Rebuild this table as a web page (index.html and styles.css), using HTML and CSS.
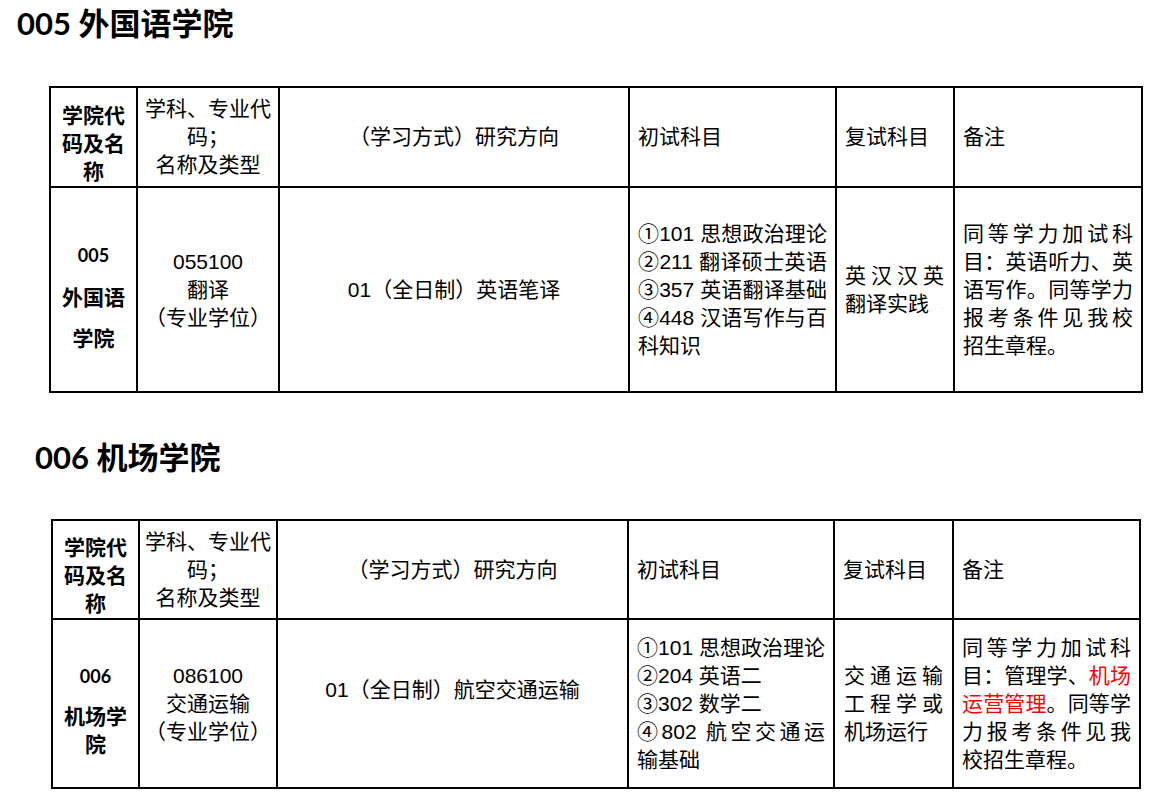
FILE: index.html
```html
<!DOCTYPE html>
<html lang="zh-CN">
<head>
<meta charset="utf-8">
<title>研究生招生专业目录</title>
<link rel="stylesheet" href="styles.css">
</head>
<body>
<h2 class="dept-title first">005 外国语学院</h2>
<table class="grid t1">
  <colgroup>
    <col class="c1"><col class="c2"><col class="c3"><col class="c4"><col class="c5"><col class="c6">
  </colgroup>
  <tr class="head">
    <td class="hc1"><div>学院代</div><div>码及名</div><div>称</div></td>
    <td class="center"><div>学科、专业代</div><div>码；</div><div>名称及类型</div></td>
    <td class="center">（学习方式）研究方向</td>
    <td class="left">初试科目</td>
    <td class="left">复试科目</td>
    <td class="left">备注</td>
  </tr>
  <tr class="body">
    <td class="center b1">
      <div class="code">005</div>
      <div class="name loose"><div>外国语</div><div>学院</div></div>
    </td>
    <td class="center"><div>055100</div><div>翻译</div><div>（专业学位）</div></td>
    <td class="center">01（全日制）英语笔译</td>
    <td class="lines exam">
      <div class="jl">①101 思想政治理论</div>
      <div class="jl">②211 翻译硕士英语</div>
      <div class="jl">③357 英语翻译基础</div>
      <div class="jl">④448 汉语写作与百</div>
      <div>科知识</div>
    </td>
    <td class="lines retest">
      <div class="jl">英汉汉英</div>
      <div>翻译实践</div>
    </td>
    <td class="lines note">
      <div class="jl">同等学力加试科</div>
      <div class="jl">目：英语听力、英</div>
      <div class="jl">语写作。同等学力</div>
      <div class="jl">报考条件见我校</div>
      <div>招生章程。</div>
    </td>
  </tr>
</table>

<h2 class="dept-title second">006 机场学院</h2>
<table class="grid t2">
  <colgroup>
    <col class="c1"><col class="c2"><col class="c3"><col class="c4"><col class="c5"><col class="c6">
  </colgroup>
  <tr class="head">
    <td class="hc1"><div>学院代</div><div>码及名</div><div>称</div></td>
    <td class="center"><div>学科、专业代</div><div>码；</div><div>名称及类型</div></td>
    <td class="center">（学习方式）研究方向</td>
    <td class="left">初试科目</td>
    <td class="left">复试科目</td>
    <td class="left">备注</td>
  </tr>
  <tr class="body">
    <td class="center b1">
      <div class="code">006</div>
      <div class="name tight"><div>机场学</div><div>院</div></div>
    </td>
    <td class="center"><div>086100</div><div>交通运输</div><div>（专业学位）</div></td>
    <td class="center dir">01（全日制）航空交通运输</td>
    <td class="lines exam">
      <div class="jl">①101 思想政治理论</div>
      <div>②204 英语二</div>
      <div>③302 数学二</div>
      <div class="jl">④802 航空交通运</div>
      <div>输基础</div>
    </td>
    <td class="lines retest">
      <div class="jl">交通运输</div>
      <div class="jl">工程学或</div>
      <div>机场运行</div>
    </td>
    <td class="lines note">
      <div class="jl">同等学力加试科</div>
      <div class="jl">目：管理学、<span class="red">机场</span></div>
      <div class="jl"><span class="red">运营管理</span>。同等学</div>
      <div class="jl">力报考条件见我</div>
      <div>校招生章程。</div>
    </td>
  </tr>
</table>
</body>
</html>
```

FILE: styles.css
```css
html, body {
  margin: 0;
  padding: 0;
  background: #ffffff;
  color: #000000;
}

body {
  font-family: "Liberation Sans", "Noto Sans CJK SC", sans-serif;
  font-size: 21px;
}

.dept-title {
  margin: 0;
  font-family: "Lato", "Noto Sans CJK SC", sans-serif;
  font-weight: 700;
  font-size: 31px;
  line-height: 46px;
}

.dept-title.first {
  padding-left: 17px;
}

.dept-title.second {
  padding-left: 35px;
  margin-top: 41px;
}

.grid {
  border-collapse: collapse;
  table-layout: fixed;
}

.grid td {
  border: 2px solid #000000;
  vertical-align: middle;
  padding: 0 8px;
  line-height: 28px;
  white-space: nowrap;
}

.t1 {
  width: 1092px;
  margin: 40px 0 0 49px;
}

.t2 {
  width: 1088px;
  margin: 39px 0 0 51px;
}

.t1 .c1 { width: 87px; }
.t1 .c2 { width: 142px; }
.t1 .c3 { width: 350px; }
.t1 .c4 { width: 207px; }
.t1 .c5 { width: 118px; }
.t1 .c6 { width: 188px; }

.t2 .c1 { width: 87px; }
.t2 .c2 { width: 138px; }
.t2 .c3 { width: 351px; }
.t2 .c4 { width: 206px; }
.t2 .c5 { width: 119px; }
.t2 .c6 { width: 187px; }

.t1 .head { height: 97px; }
.t1 .body { height: 205px; }
.t2 .head { height: 99px; }
.t2 .body { height: 169px; }

.grid .center {
  text-align: center;
  padding: 0 2px;
}

.t2 .dir {
  padding-bottom: 28px;
}

.grid .left {
  text-align: left;
}

.grid .hc1 {
  text-align: center;
  font-weight: 700;
  padding: 0;
}

.t1 .hc1 { padding-top: 14px; }
.t2 .hc1 { padding-top: 12px; }

.grid .b1 {
  font-weight: 700;
  padding: 0;
}

.t1 .b1 { padding-top: 20px; }
.t2 .b1 { padding-top: 13px; }

.code {
  font-family: "Lato", "Noto Sans CJK SC", sans-serif;
  font-size: 18px;
  line-height: 28px;
}

.name.loose {
  margin-top: 8px;
  line-height: 41px;
}

.name.tight {
  margin-top: 13px;
  line-height: 28px;
}

.grid .exam {
  padding: 0 8px 0 8px;
}

.grid .retest {
  padding: 0 9px 0 8px;
}

.t2 .retest {
  padding: 0 9px 0 9px;
}

.grid .note {
  padding: 0 8px;
}

.jl {
  text-align: justify;
  text-align-last: justify;
}

.red {
  color: #ff0000;
}
```
